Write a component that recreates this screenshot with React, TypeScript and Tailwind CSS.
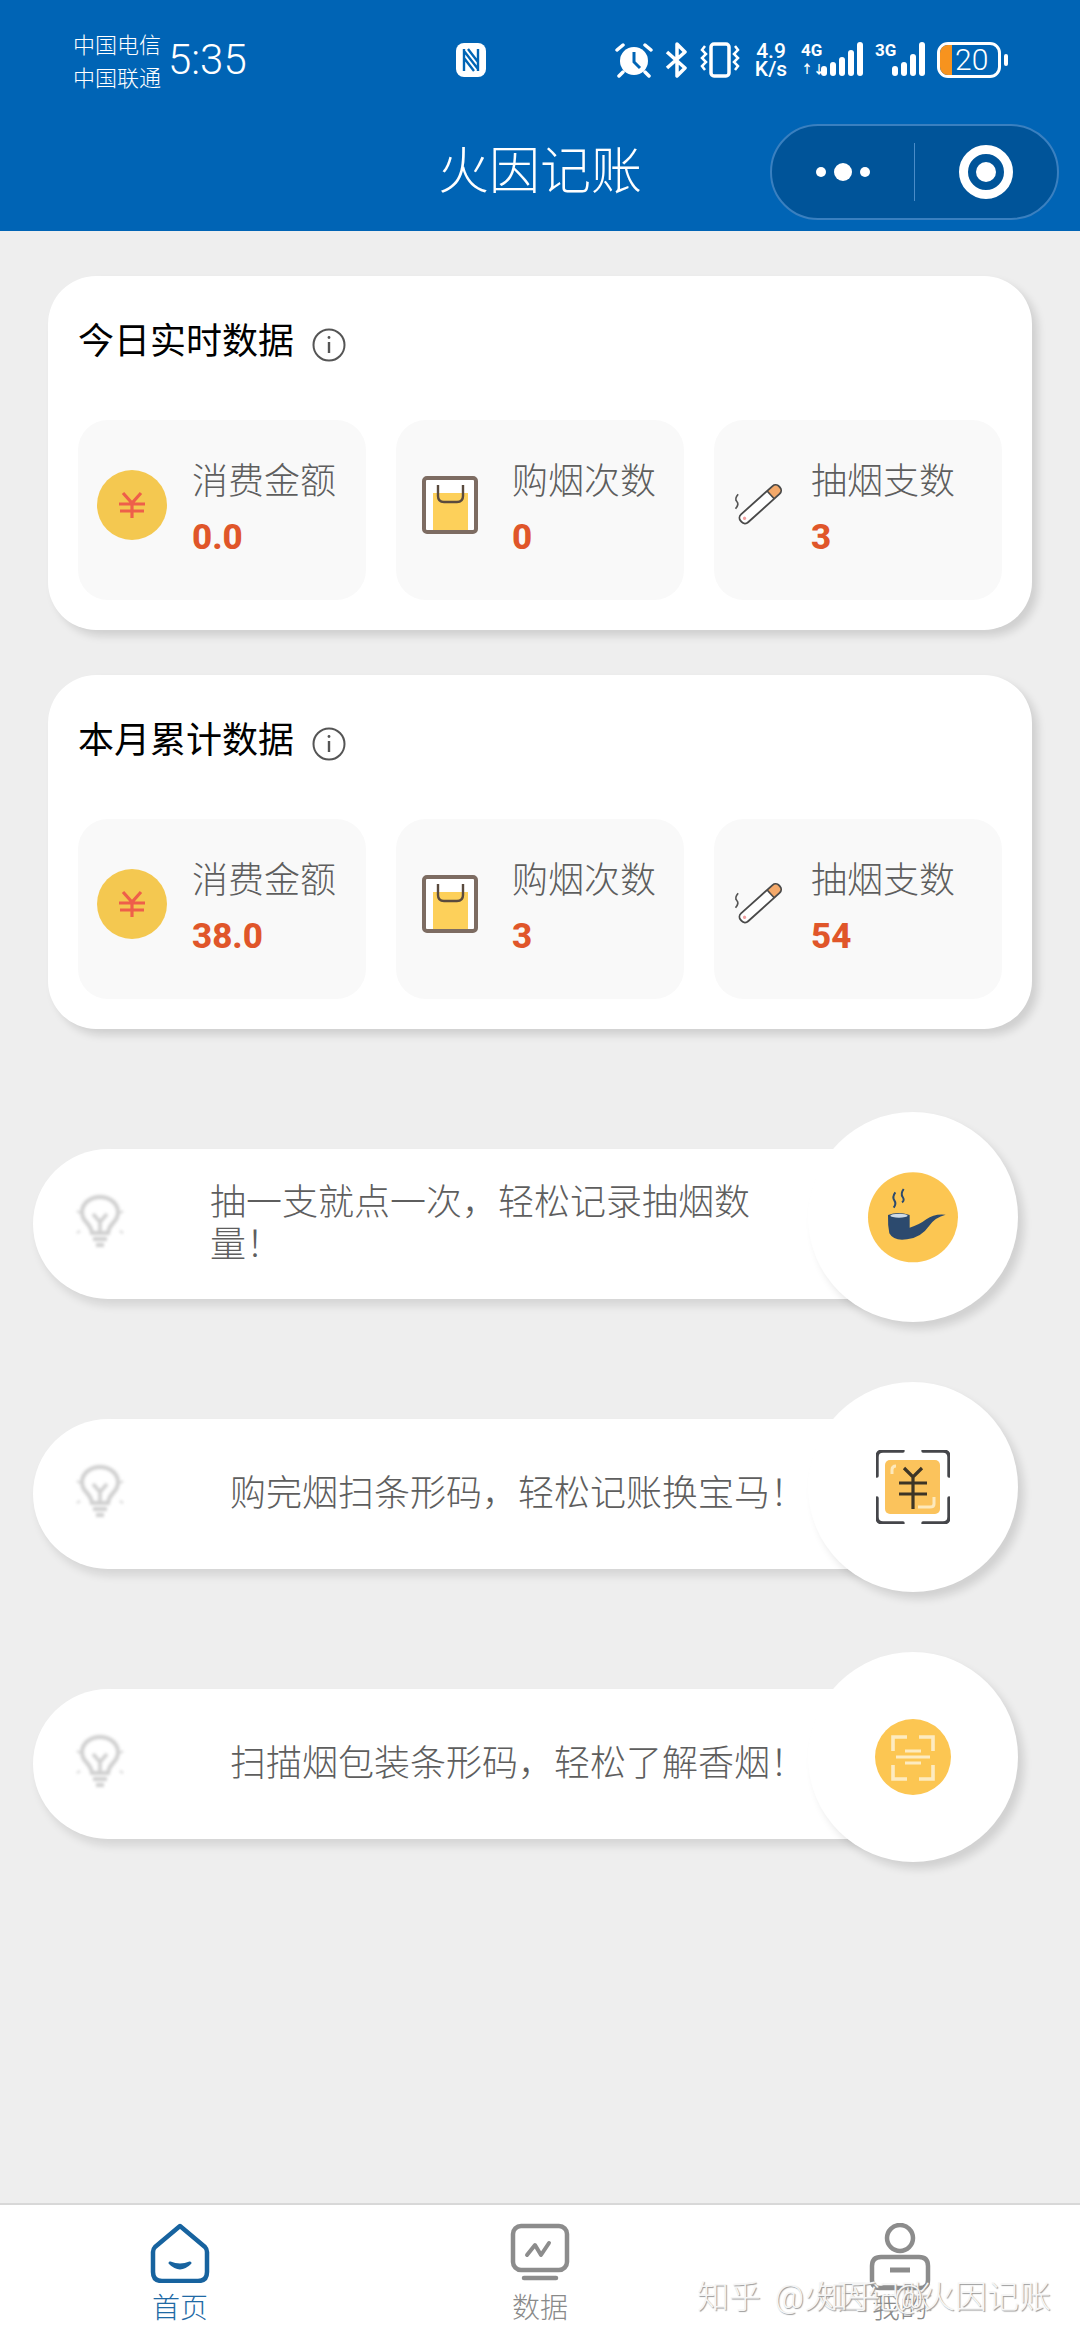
function Alarm() {
  return (
    <svg width="38" height="36" viewBox="0 0 38 36" fill="none">
      <circle cx="19" cy="19" r="14" fill="#fff" />
      <path d="M19 10v10l6 6" stroke="#0064b5" strokeWidth="3" />
      <path d="M2 8l6-5M36 8l-6-5" stroke="#fff" strokeWidth="3.5" strokeLinecap="round" />
      <path d="M8 30l-4 4M30 30l4 4" stroke="#fff" strokeWidth="3.5" strokeLinecap="round" />
    </svg>
  );
}

function Bluetooth() {
  return (
    <svg width="22" height="36" viewBox="0 0 22 36" fill="none" stroke="#fff" strokeWidth="3.5" strokeLinejoin="round">
      <path d="M2 10l18 16-8 8V2l8 8L2 26" />
    </svg>
  );
}

function Vibrate() {
  return (
    <svg width="42" height="36" viewBox="0 0 42 36" fill="none" stroke="#fff">
      <rect x="12" y="2" width="18" height="32" rx="3" strokeWidth="3.5" />
      <path d="M6 4l-3 4 4 4-4 4 4 4-4 4 3 4M36 4l3 4-4 4 4 4-4 4 4 4-3 4" strokeWidth="2.5" />
    </svg>
  );
}

function Signal({ heights }: { heights: number[] }) {
  return (
    <div className="flex items-end gap-[3px] h-[34px]">
      {heights.map((h, i) => (
        <div key={i} className="w-[6px] rounded-full bg-white" style={{ height: h }} />
      ))}
    </div>
  );
}

function Coin() {
  return (
    <svg width="70" height="70" viewBox="0 0 70 70" fill="none">
      <circle cx="35" cy="35" r="35" fill="#f4c850" />
      <path d="M26 23l9 10 9-10M22 34h26M23 41h24M35 33v15" stroke="#ee5f4a" strokeWidth="3.2" />
    </svg>
  );
}

function Bag() {
  return (
    <svg width="56" height="58" viewBox="0 0 56 58" fill="none">
      <rect x="2" y="2" width="52" height="54" rx="3" fill="#fff" />
      <rect x="11" y="17" width="35" height="38" fill="#fdd05a" />
      <path d="M16 9v11q0 6 6 6h13q6 0 6-6V9" stroke="#5a4a3e" strokeWidth="2.4" />
      <rect x="2" y="2" width="52" height="54" rx="3" stroke="#7d6c62" strokeWidth="4" />
    </svg>
  );
}

function Cigarette() {
  return (
    <svg width="52" height="48" viewBox="70 95 156 145" fill="none">
      <g transform="translate(152 165) rotate(-42)">
        <rect x="-78" y="-16" width="156" height="32" rx="14" fill="#fff" />
        <path d="M42-16h22q14 0 14 14v4q0 14-14 14H42z" fill="#f4a96a" />
        <rect x="-78" y="-16" width="156" height="32" rx="14" stroke="#4a4a4a" strokeWidth="5.5" />
        <path d="M42-16v32" stroke="#4a4a4a" strokeWidth="5" />
        <circle cx="-64" cy="0" r="5" fill="#f2a0a0" />
      </g>
      <path d="M85 135q-12 14-4 22t-4 22" stroke="#555" strokeWidth="5" />
    </svg>
  );
}

function Bulb() {
  return (
    <svg className="blur-[1.5px] -mt-[5px]" width="52" height="54" viewBox="0 0 52 54" fill="none" stroke="#cfcfcf">
      <path d="M18 38q-1-6-5-10-5-5-5-11a18 15 0 0 1 36 0q0 6-5 11-4 4-5 10z" strokeWidth="4" />
      <path d="M19 19l7 8 7-8M26 27v10" strokeWidth="3.5" />
      <path d="M19 44h14M22 50h8" strokeWidth="4" />
      <path d="M3 16l3 2M49 16l-3 2M3 38l3-2M49 38l-3-2" strokeWidth="2" />
    </svg>
  );
}

function Pipe() {
  return (
    <svg width="110" height="105" viewBox="-5 -2 330 315" fill="none">
      <circle cx="160" cy="155" r="135" fill="#fcc652" />
      <path d="M85 148q30-12 65 0v38q28-8 50-25 24-18 58-14-32 8-48 32-26 38-68 42-40 6-53-18-5-25-4-55z" fill="#2c4a6e" />
      <ellipse cx="118" cy="150" rx="26" ry="6" fill="#cfdbe6" />
      <path d="M107 80q-10 14-3 24t-2 22M132 70q-10 14-3 24t-2 16" stroke="#2c4a6e" strokeWidth="6" />
    </svg>
  );
}

function ScanYuan() {
  return (
    <svg width="74" height="74" viewBox="0 0 74 74" fill="none">
      <rect x="9" y="10" width="55" height="54" rx="5" fill="#fbc35c" />
      <path d="M16 24v-4q0-4 4-4M58 47v7q0 3-4 3H42" stroke="#fde9bc" strokeWidth="3" />
      <path d="M1 26V7q0-6 6-6h20M47 1h20q6 0 6 6v19M1 48v19q0 6 6 6h20M47 73h20q6 0 6-6V48" stroke="#45464a" strokeWidth="3.4" strokeLinecap="round" />
      <path d="M28 18l9 9 9-9M23 33h28M23 44h28M37 27v32" stroke="#3d3526" strokeWidth="3.2" />
    </svg>
  );
}

function ScanCode() {
  return (
    <svg width="76" height="76" viewBox="0 0 76 76" fill="none">
      <circle cx="38" cy="38" r="38" fill="#fcc652" />
      <path d="M18 32V18h14M44 18h14v14M18 46v14h14M58 46v14H44" stroke="#fdebc0" strokeWidth="3.6" />
      <path d="M30 32h16M21 38h34M30 44h16" stroke="#fdebc0" strokeWidth="3" />
    </svg>
  );
}

function HomeIcon() {
  return (
    <svg width="60" height="60" viewBox="0 0 60 60" fill="none">
      <path d="M30 3L55 24q2 2 2 5v20q0 9-9 9H12q-9 0-9-9V29q0-3 2-5z" stroke="#17639f" strokeWidth="4.5" strokeLinejoin="round" />
      <path d="M20 40q10 10 20 0-10 4-20 0z" stroke="#17639f" strokeWidth="3" strokeLinejoin="round" fill="#17639f" />
    </svg>
  );
}

function DataIcon() {
  return (
    <svg width="60" height="60" viewBox="0 0 60 60" fill="none" stroke="#8c8c8c">
      <rect x="3" y="3" width="54" height="44" rx="8" strokeWidth="4.5" />
      <path d="M17 32l8-10 6 10 8-12" strokeWidth="4" strokeLinejoin="round" strokeLinecap="round" />
      <path d="M14 55h32" strokeWidth="4.5" strokeLinecap="round" />
    </svg>
  );
}

function MineIcon() {
  return (
    <svg width="62" height="68" viewBox="0 0 62 68" fill="none" stroke="#8c8c8c">
      <circle cx="31" cy="15" r="13" strokeWidth="4.5" />
      <path d="M12 34h38q9 0 9 9v14q0 8-8 8H11q-8 0-8-8V43q0-9 9-9z" strokeWidth="4.5" />
      <path d="M21 47h20" strokeWidth="5" />
    </svg>
  );
}

const InfoIcon = () => (
  <svg width="34" height="34" viewBox="0 0 34 34" fill="none" stroke="#555">
    <circle cx="17" cy="17" r="15.5" strokeWidth="2" />
    <path d="M17 14v11" strokeWidth="2.4" />
    <circle cx="17" cy="9.5" r="1.4" fill="#555" stroke="none" />
  </svg>
);

function Tile({ icon, box, label, value }: { icon: React.ReactNode; box: string; label: string; value: string }) {
  return (
    <div className="flex items-center h-[180px] rounded-[30px] bg-[#f9f9f9]">
      <div className={box + " shrink-0 -mt-[10px]"}>{icon}</div>
      <div className="flex flex-col -mt-[2px]">
        <div className="text-[36px] leading-[44px] text-[#5e5e5e] font-light">{label}</div>
        <div className="mt-[14px] text-[35px] leading-[40px] font-extrabold text-[#e0562a]">{value}</div>
      </div>
    </div>
  );
}

function DataCard({ title, vals }: { title: string; vals: string[] }) {
  return (
    <section className="h-[354px] rounded-[48px] bg-white px-[30px] pt-[42px] shadow-[6px_6px_8px_rgba(0,0,0,0.13)]">
      <div className="flex items-center gap-[18px] h-[48px]">
        <h2 className="text-[36px] leading-[48px] font-normal text-black">{title}</h2>
        <div className="mt-[6px]"><InfoIcon /></div>
      </div>
      <div className="grid grid-cols-3 gap-[30px] mt-[54px]">
        <Tile icon={<Coin />} box="pl-[19px] w-[114px]" label="消费金额" value={vals[0]} />
        <Tile icon={<Bag />} box="pl-[26px] w-[116px]" label="购烟次数" value={vals[1]} />
        <Tile icon={<Cigarette />} box="pl-[19px] w-[97px]" label="抽烟支数" value={vals[2]} />
      </div>
    </section>
  );
}

function TipRow({ text, textClass, icon }: { text: string; textClass: string; icon: React.ReactNode }) {
  return (
    <div className="relative ml-[33px] w-[880px] h-[150px]">
      <div className="flex items-center h-full rounded-l-full bg-white shadow-[4px_7px_8px_rgba(0,0,0,0.1)]">
        <div className="ml-[41px] shrink-0"><Bulb /></div>
        <p className={textClass + " text-[36px] leading-[42px] text-[#5e5e5e] font-light"}>{text}</p>
      </div>
      {/* round button sits over the end of the pill */}
      <div className="absolute left-[775px] -top-[37px] flex items-center justify-center w-[210px] h-[210px] rounded-full bg-white shadow-[6px_7px_8px_rgba(0,0,0,0.12)]">
        {icon}
      </div>
    </div>
  );
}

export default function App() {
  return (
    <div className="relative flex flex-col w-[1080px] h-[2340px] overflow-hidden bg-[#eeeeee] [font-family:Roboto,'Noto_Sans_CJK_SC',sans-serif]">
      {/* Header */}
      <header className="bg-[#0064b5] text-white h-[231px] shrink-0">
        <div className="flex items-start h-[113px] pl-[73px] pr-[72px] pt-[29px]">
          <div className="text-[22px] leading-[33px] w-[95px] font-light">
            <div>中国电信</div>
            <div>中国联通</div>
          </div>
          <div className="text-[42px] leading-[62px] font-light">5:35</div>
          <svg className="ml-[208px] mt-[13px]" width="32" height="36" viewBox="0 0 32 36" fill="none">
            <rect x="1" y="1" width="30" height="34" rx="8" fill="#fff" />
            <path d="M9 7v22M23 7v22M9 9l14 18M9 16l10 13M13 7l10 13" stroke="#0064b5" strokeWidth="2.4" />
          </svg>
          <div className="flex items-center gap-[12px] ml-auto mt-[13px] h-[36px]">
            <Alarm />
            <Bluetooth />
            <Vibrate />
            <div className="text-[21px] leading-[18px] text-center font-medium w-[36px]">
              <div>4.9</div>
              <div>K/s</div>
            </div>
            <div className="relative w-[62px] h-[36px] flex justify-end">
              <span className="absolute left-0 -top-[2px] text-[17px] leading-[20px] font-bold">4G</span>
              <span className="absolute left-0 bottom-[1px] text-[12px] leading-[14px] font-bold">↑↓</span>
              <Signal heights={[10, 14, 19, 26, 34]} />
            </div>
            <div className="relative w-[50px] h-[36px] flex justify-end">
              <span className="absolute left-0 -top-[2px] text-[17px] leading-[20px] font-bold">3G</span>
              <Signal heights={[10, 14, 22, 34]} />
            </div>
            <div className="flex items-center gap-[3px]">
              <div className="flex items-center w-[64px] h-[36px] rounded-[11px] border-[3px] border-white overflow-hidden">
                <div className="w-[12px] h-full bg-[#f7931e]" />
                <span className="ml-[3px] text-[30px] leading-[30px] font-light">20</span>
              </div>
              <div className="w-[4px] h-[12px] rounded-full bg-white" />
            </div>
          </div>
        </div>
        <div className="grid grid-cols-[1fr_auto_1fr] items-center h-[118px] pr-[21px]">
          <div />
          <h1 className="text-[51px] leading-[60px] font-light -mr-[21px]">火因记账</h1>
          <div className="justify-self-end flex items-center w-[289px] h-[96px] rounded-full bg-[#005499] border-2 border-[#3a80c0]">
            <div className="flex items-center justify-center gap-[8px] w-[142px]">
              <span className="w-[10px] h-[10px] rounded-full bg-white" />
              <span className="w-[18px] h-[18px] rounded-full bg-white" />
              <span className="w-[10px] h-[10px] rounded-full bg-white" />
            </div>
            <div className="w-[1px] h-[58px] bg-[#4a8cc8]" />
            <div className="flex items-center justify-center flex-1">
              <div className="flex items-center justify-center w-[54px] h-[54px] rounded-full border-[9px] border-white">
                <span className="w-[20px] h-[20px] rounded-full bg-white" />
              </div>
            </div>
          </div>
        </div>
      </header>

      {/* Body */}
      <main className="flex-1">
        <div className="flex flex-col gap-[45px] mx-[48px] mt-[45px]">
          <DataCard title="今日实时数据" vals={["0.0", "0", "3"]} />
          <DataCard title="本月累计数据" vals={["38.0", "3", "54"]} />
        </div>
        <div className="flex flex-col gap-[120px] mt-[120px]">
          <TipRow text="抽一支就点一次，轻松记录抽烟数量！" textClass="ml-[84px] w-[560px]" icon={<Pipe />} />
          <TipRow text="购完烟扫条形码，轻松记账换宝马！" textClass="ml-[104px] w-[580px]" icon={<ScanYuan />} />
          <TipRow text="扫描烟包装条形码，轻松了解香烟！" textClass="ml-[104px] w-[580px]" icon={<ScanCode />} />
        </div>
      </main>

      {/* Tab bar */}
      <nav className="relative grid grid-cols-3 h-[137px] shrink-0 bg-white border-t-2 border-[#d8d8d8]">
        <div className="flex flex-col items-center pt-[18px]">
          <div className="h-[70px]"><HomeIcon /></div>
          <span className="text-[28px] leading-[32px] text-[#1f6aa5] font-light">首页</span>
        </div>
        <div className="flex flex-col items-center pt-[18px]">
          <div className="h-[70px]"><DataIcon /></div>
          <span className="text-[28px] leading-[32px] text-[#8a8a8a] font-light">数据</span>
        </div>
        <div className="flex flex-col items-center pt-[18px]">
          <div className="h-[70px]"><MineIcon /></div>
          <span className="text-[28px] leading-[32px] text-[#8a8a8a] font-light">我的</span>
        </div>
        {/* watermark, stamped twice */}
        <span className="absolute left-[697px] top-[72px] text-[32px] leading-[40px] whitespace-nowrap font-light text-[#f6f6f6] [word-spacing:6px] [text-shadow:1px_1px_1px_#999]">知乎 @火因记账</span>
        <span className="absolute left-[816px] top-[72px] text-[32px] leading-[40px] whitespace-nowrap font-light text-[#f6f6f6] [word-spacing:6px] [text-shadow:1px_1px_1px_#999]">知乎 @火因记账</span>
      </nav>
    </div>
  );
}
